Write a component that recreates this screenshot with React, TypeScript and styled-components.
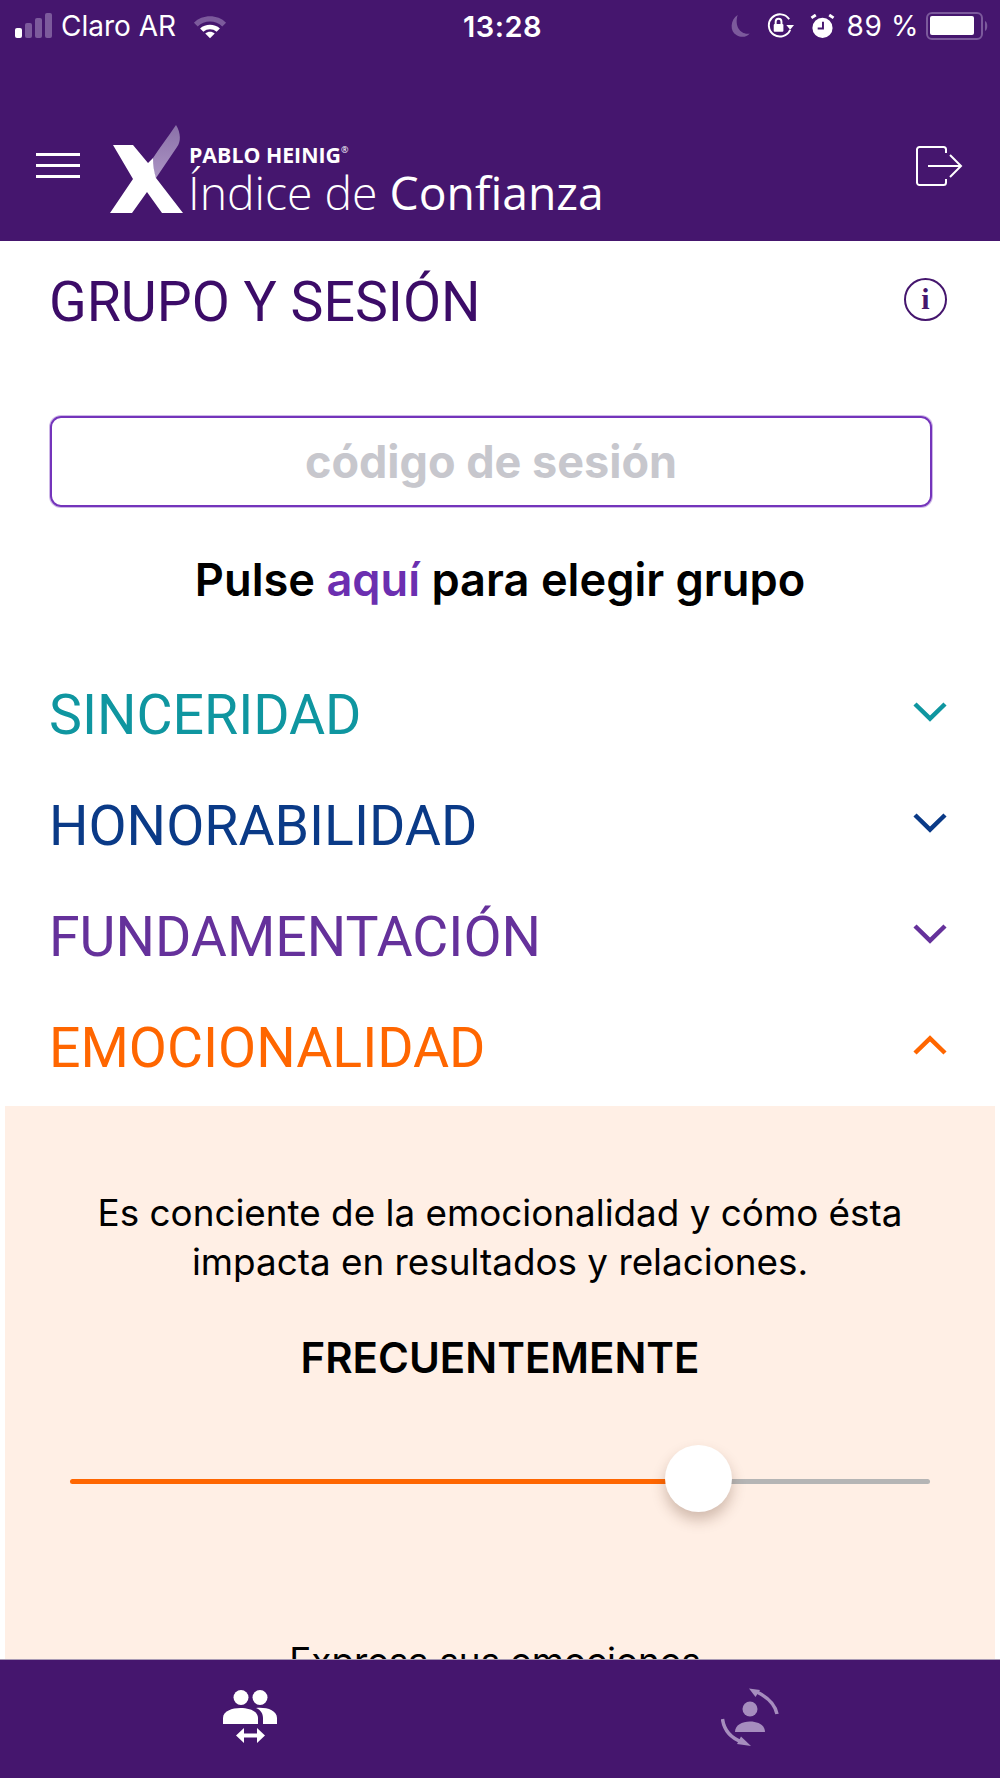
import React from "react";
import styled, { createGlobalStyle } from "styled-components";

const PURPLE = "#45166e";

const Global = createGlobalStyle`
  html, body { margin: 0; padding: 0; background: #fff; }
  * { box-sizing: border-box; }
  #root { width: 1000px; height: 1778px; }
`;

const Screen = styled.div`
  width: 1000px;
  height: 1778px;
  display: flex;
  flex-direction: column;
  overflow: hidden;
  font-family: Inter, "Liberation Sans", sans-serif;
  background: #fff;
`;

const Header = styled.header`
  height: 241px;
  flex: none;
  background: ${PURPLE};
  display: flex;
  flex-direction: column;
  justify-content: space-between;
`;

const StatusBar = styled.div`
  height: 52px;
  padding: 0 12px 0 14px;
  display: grid;
  grid-template-columns: 1fr auto 1fr;
  align-items: center;
  color: #fff;
  font-size: 28px;
`;

const StatusLeft = styled.div`
  display: flex;
  align-items: center;
  gap: 7px;
`;

const StatusRight = styled.div`
  display: flex;
  align-items: center;
  justify-content: flex-end;
  gap: 15px;
`;

const Clock = styled.span`
  margin-left: 3px;
  font-weight: 600;
  font-size: 29px;
  letter-spacing: 0.5px;
`;

const BatteryLevel = styled.span`
  margin-left: -3px;
  letter-spacing: 0.6px;
`;

const NavBar = styled.div`
  height: 108px;
  margin-bottom: 18px;
  padding: 0 37px 0 36px;
  display: flex;
  align-items: center;
  justify-content: space-between;
`;

const Brand = styled.div`
  display: flex;
  align-items: flex-end;
  gap: 30px;
`;

const Burger = styled.div`
  width: 44px;
  height: 25px;
  margin-bottom: 35px;
  display: flex;
  flex-direction: column;
  justify-content: space-between;
  span {
    display: block;
    height: 3px;
    background: #fff;
  }
`;

const LogoWrap = styled.div`
  display: flex;
  align-items: flex-end;
`;

const LogoText = styled.div`
  margin: 0 0 -5px 4px;
  color: #fff;
  font-family: "Open Sans", sans-serif;
`;

const LogoTop = styled.div`
  margin-bottom: 3px;
  padding-left: 1px;
  font-size: 21.3px;
  font-weight: 700;
  line-height: 20px;
  sup {
    font-size: 9px;
    font-weight: 400;
    vertical-align: top;
    line-height: 10px;
  }
`;

const LogoMain = styled.div`
  font-size: 46.3px;
  font-weight: 300;
  line-height: 50px;
  b {
    font-weight: 400;
  }
`;

const Main = styled.main`
  flex: 1;
  min-height: 0;
  overflow: hidden;
`;

const TitleRow = styled.div`
  height: 118px;
  padding: 0 53px 0 49px;
  display: flex;
  align-items: center;
  justify-content: space-between;
`;

const Title = styled.h1`
  margin: 4px 0 0;
  font-family: Roboto, sans-serif;
  font-size: 55.4px;
  font-weight: 400;
  color: #3c0c68;
`;

const InfoBadge = styled.div`
  width: 43px;
  height: 43px;
  margin-top: -2px;
  border-radius: 50%;
  border: 2px solid ${PURPLE};
  color: ${PURPLE};
  display: flex;
  align-items: center;
  justify-content: center;
  font-family: "Liberation Serif", serif;
  font-weight: 700;
  font-size: 30px;
`;

const CodeField = styled.div`
  margin: 57px 68px 0 50px;
  height: 91px;
  border: 2px solid #7434bb;
  box-shadow: 0 0 0 1px rgba(116, 52, 187, 0.35);
  border-radius: 11px;
  display: flex;
  align-items: center;
  justify-content: center;
  font-size: 45px;
  font-weight: 700;
  color: #c7c7cd;
`;

const GroupHint = styled.div`
  margin-top: 47px;
  text-align: center;
  font-size: 45.2px;
  line-height: 52px;
  font-weight: 600;
  color: #000;
  em {
    font-style: normal;
    color: #6b2fb0;
  }
`;

const Accordion = styled.div`
  margin-top: 50px;
`;

const SectionRow = styled.div<{ $color: string }>`
  height: 111px;
  padding: 0 53px 0 49px;
  display: flex;
  align-items: center;
  justify-content: space-between;
  font-family: Roboto, sans-serif;
  font-size: 55.4px;
  color: ${(p) => p.$color};
`;

const SectionLabel = styled.span`
  padding-top: 7px;
`;

const Panel = styled.section`
  margin: 6px 5px 0;
  padding-top: 82px;
  height: 600px;
  background: #ffefe5;
  text-align: center;
  color: #000;
`;

const PanelText = styled.p`
  margin: 0;
  font-size: 36.85px;
  line-height: 49px;
`;

const Frequency = styled.div`
  margin-top: 47px;
  font-size: 42px;
  line-height: 50px;
  font-weight: 600;
`;

const Slider = styled.div`
  position: relative;
  margin: 65px 65px 0;
  height: 66px;
  display: flex;
  align-items: center;
`;

const TrackFill = styled.div`
  height: 5px;
  flex: none;
  background: #ff6600;
  border-radius: 3px 0 0 3px;
`;

const TrackRest = styled.div`
  height: 5px;
  flex: 1;
  background: #b5b5b5;
  border-radius: 0 3px 3px 0;
`;

const Thumb = styled.div`
  position: absolute;
  top: -3px;
  width: 67px;
  height: 67px;
  margin-left: -33px;
  border-radius: 50%;
  background: #fff;
  box-shadow: 0 8px 14px rgba(90, 50, 30, 0.28);
`;

const NextText = styled(PanelText)`
  margin-top: 122px;
  padding-right: 10px;
`;

const TabBar = styled.nav`
  height: 119px;
  flex: none;
  background: ${PURPLE};
  border-top: 1px solid #a99bb5;
  display: flex;
`;

const Tab = styled.div<{ $top: number }>`
  flex: 1;
  display: flex;
  justify-content: center;
  align-items: flex-start;
  padding-top: ${(p) => p.$top}px;
`;

const Chevron = ({ up }: { up?: boolean }) => (
  <svg width="34" height="20" viewBox="0 0 34 20" fill="none" stroke="currentColor" strokeWidth="4.5">
    <path d={up ? "M2 18 L17 3.5 L32 18" : "M2 2 L17 16.5 L32 2"} />
  </svg>
);

const SignalIcon = () => (
  <svg width="40" height="26" viewBox="0 0 40 26" style={{ display: "block" }}>
    <rect x="1" y="15" width="7" height="10" rx="2" fill="#fff" />
    <rect x="11" y="10" width="7" height="15" rx="2" fill="#7c5a9c" />
    <rect x="21" y="5" width="7" height="20" rx="2" fill="#7c5a9c" />
    <rect x="31" y="0" width="7" height="25" rx="2" fill="#7c5a9c" />
  </svg>
);

const WifiIcon = () => (
  <svg width="34" height="25" viewBox="0 0 36 26" style={{ marginLeft: 10 }}>
    <path d="M1 9 C10 0 26 0 35 9 L31 13 C24 6 12 6 5 13 Z" fill="#7c5a9c" />
    <path d="M7.5 15 C13 10 23 10 28.5 15 L25 18.5 C21 15 15 15 11 18.5 Z" fill="#fff" />
    <path d="M13 20.5 C16 18 20 18 23 20.5 L18 25.5 Z" fill="#fff" />
  </svg>
);

const MoonIcon = () => (
  <svg width="23" height="24" viewBox="0 0 24 26">
    <path d="M10 1 C2 6 1 19 9 23 C14 26 20 25 23 21 C14 23 6 14 10 1 Z" fill="#7c5a9c" />
  </svg>
);

const RotationLockIcon = () => (
  <svg width="29" height="26" viewBox="0 0 30 26" fill="none">
    <path d="M24 6 A11.5 11.5 0 1 0 25 17" stroke="#fff" strokeWidth="2" />
    <path d="M21 12 H29 L25 17 Z" fill="#fff" />
    <rect x="8" y="11" width="10" height="8" rx="1" fill="#fff" />
    <path d="M10 11 V8.5 A3 3 0 0 1 16 8.5 V11" stroke="#fff" strokeWidth="2" />
  </svg>
);

const AlarmIcon = () => (
  <svg width="25" height="25" viewBox="0 0 26 26" fill="none">
    <circle cx="13" cy="14.5" r="10.5" fill="#fff" />
    <path d="M1.5 4 L6 1 M24.5 4 L20 1" stroke="#fff" strokeWidth="3" />
    <path d="M13.5 8 V15 H8" stroke={PURPLE} strokeWidth="2" />
  </svg>
);

const BatteryIcon = () => (
  <svg width="62" height="28" viewBox="0 0 62 28" fill="none" style={{ marginLeft: -8 }}>
    <rect x="1" y="1" width="55" height="26" rx="5" stroke="#7c5a9c" strokeWidth="2" />
    <rect x="4" y="4" width="44" height="19" rx="2" fill="#fff" />
    <path d="M59 9 C62 10 62 18 59 19 Z" fill="#7c5a9c" />
  </svg>
);

const LogoMark = () => (
  <svg width="74" height="88" viewBox="0 0 74 88" style={{ display: "block" }}>
    <defs>
      <linearGradient id="feather" x1="0" y1="0" x2="0" y2="1">
        <stop offset="0" stopColor="#8a70a8" />
        <stop offset="1" stopColor="#ac95c4" />
      </linearGradient>
    </defs>
    <path d="M43 33 C50 22 58 12 66 0 C71 8 71 17 67 22 L46 53 C43 47 43 40 43 33 Z" fill="url(#feather)" />
    <path d="M3 20 H23 L38 38 L43 33 C43 40 44 47 46 53 L73 88 H52 L37 67 L22 88 H0 L23 54 Z" fill="#fff" />
  </svg>
);

const LogoutIcon = () => (
  <svg width="47" height="40" viewBox="0 0 47 40" fill="none" stroke="#fff" strokeWidth="2" style={{ marginBottom: 6 }}>
    <path d="M30 7 V3.5 A2.5 2.5 0 0 0 27.5 1 H3.5 A2.5 2.5 0 0 0 1 3.5 V36.5 A2.5 2.5 0 0 0 3.5 39 H27.5 A2.5 2.5 0 0 0 30 36.5 V33" />
    <path d="M12 20 H45 M34 9 L45 20 L34 31" />
  </svg>
);

const GroupIcon = () => (
  <svg width="54" height="53" viewBox="0 0 54 53" fill="#fff" style={{ display: "block" }}>
    <circle cx="18" cy="7.5" r="7.5" />
    <circle cx="37" cy="7.5" r="7.5" />
    <path d="M0 34 V28 C0 21 9 18 17.5 18 C26 18 35 21 35 28 V34 Z" />
    <path d="M33 18 C43 17 54 20 54 28 V34 H40 V28 C40 24 38 20 33 18 Z" />
    <path d="M13 45.5 L21 38 V43.5 H34 V38 L42 45.5 L34 53 V47.5 H21 V53 Z" />
  </svg>
);

const SwapPersonIcon = () => (
  <svg width="58" height="59" viewBox="0 0 58 59" fill="#a68dbe" style={{ display: "block" }}>
    <circle cx="29" cy="21" r="7.5" />
    <path d="M14 44 C14 37 21 33.5 29 33.5 C37 33.5 44 37 44 44 Z" />
    <path d="M28 0.5 L39 2 L34.5 9 Z" />
    <path d="M36 4 C46 9 54 16 56 26" fill="none" stroke="#a68dbe" strokeWidth="3.5" />
    <path d="M30 58 L16 56 L20 48.5 Z" />
    <path d="M1.5 31 C3 42 10 50 21 54" fill="none" stroke="#a68dbe" strokeWidth="3.5" />
  </svg>
);

const sections = [
  { name: "SINCERIDAD", color: "#0f96a0" },
  { name: "HONORABILIDAD", color: "#0a3a87" },
  { name: "FUNDAMENTACIÓN", color: "#65319b" },
  { name: "EMOCIONALIDAD", color: "#ff6600", open: true },
];

export default function App() {
  return (
    <Screen>
      <Global />
      <Header>
        <StatusBar>
          <StatusLeft>
            <SignalIcon />
            <span>Claro AR</span>
            <WifiIcon />
          </StatusLeft>
          <Clock>13:28</Clock>
          <StatusRight>
            <MoonIcon />
            <RotationLockIcon />
            <AlarmIcon />
            <BatteryLevel>89 %</BatteryLevel>
            <BatteryIcon />
          </StatusRight>
        </StatusBar>
        <NavBar>
          <Brand>
            <Burger>
              <span />
              <span />
              <span />
            </Burger>
            <LogoWrap>
              <LogoMark />
              <LogoText>
                <LogoTop>
                  PABLO HEINIG<sup>®</sup>
                </LogoTop>
                <LogoMain>
                  Índice de <b>Confianza</b>
                </LogoMain>
              </LogoText>
            </LogoWrap>
          </Brand>
          <LogoutIcon />
        </NavBar>
      </Header>
      <Main>
        <TitleRow>
          <Title>GRUPO Y SESIÓN</Title>
          <InfoBadge>i</InfoBadge>
        </TitleRow>
        <CodeField>código de sesión</CodeField>
        <GroupHint>
          Pulse <em>aquí</em> para elegir grupo
        </GroupHint>
        <Accordion>
          {sections.map((s) => (
            <SectionRow key={s.name} $color={s.color}>
              <SectionLabel>{s.name}</SectionLabel>
              <Chevron up={s.open} />
            </SectionRow>
          ))}
        </Accordion>
        <Panel>
          <PanelText>
            Es conciente de la emocionalidad y cómo ésta
            <br />
            impacta en resultados y relaciones.
          </PanelText>
          <Frequency>FRECUENTEMENTE</Frequency>
          <Slider>
            <TrackFill style={{ width: "73%" }} />
            <TrackRest />
            <Thumb style={{ left: "73%" }} />
          </Slider>
          <NextText>Expresa sus emociones</NextText>
        </Panel>
      </Main>
      <TabBar>
        <Tab $top={30}>
          <GroupIcon />
        </Tab>
        <Tab $top={28}>
          <SwapPersonIcon />
        </Tab>
      </TabBar>
    </Screen>
  );
}
